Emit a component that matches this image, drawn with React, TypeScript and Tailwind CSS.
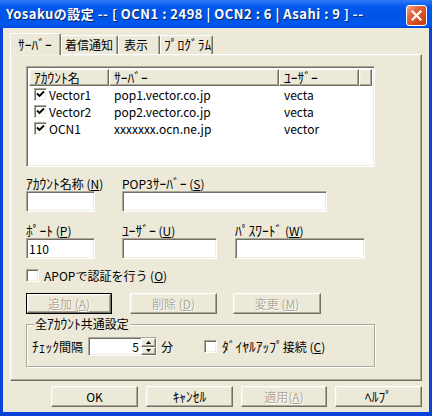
import React from "react";

const sunken =
  "border border-t-[#ACA899] border-l-[#ACA899] border-b-white border-r-white shadow-[inset_1px_1px_0_#716F64,inset_-1px_-1px_0_#F1EFE2] bg-white";
const raised =
  "border border-t-white border-l-white border-b-[#716F64] border-r-[#716F64] shadow-[inset_-1px_-1px_0_#ACA899,inset_1px_1px_0_#F1EFE2] bg-[#ECE9D8]";
const disabledText = "text-[#ACA899] [text-shadow:1px_1px_0_#fff]";

// half-width katakana look tiny in Noto, so bump those runs up a little
const J = ({ t }: { t: string }) => (
  <>
    {t.split(/([\uFF61-\uFF9F]+)/).map((part, i) =>
      /[\uFF61-\uFF9F]/.test(part) ? (
        <span key={i} className="text-[13.5px] leading-none">
          {part}
        </span>
      ) : (
        <React.Fragment key={i}>{part}</React.Fragment>
      )
    )}
  </>
);

const Check = ({ checked }: { checked: boolean }) => (
  <span className={`${sunken} inline-flex w-[13px] h-[13px] shrink-0 items-center justify-center`}>
    {checked && (
      <svg width="9" height="9" viewBox="0 0 9 9">
        <path d="M1 3.5 L3.5 6 L8 1.5" stroke="#000" strokeWidth="1.8" fill="none" />
      </svg>
    )}
  </span>
);

const Mn = ({ k }: { k: string }) => (
  <span>
    (<u>{k}</u>)
  </span>
);

const Button = ({
  children,
  disabled,
  isDefault,
  w,
}: {
  children: React.ReactNode;
  disabled?: boolean;
  isDefault?: boolean;
  w: string;
}) => (
  <div className={`${w} h-[21px] ${isDefault ? "border border-black" : ""} flex`}>
    <div className={`${raised} flex-1 flex items-center justify-center leading-[13px] ${disabled ? disabledText : "text-black"}`}>
      <span className="whitespace-pre">{children}</span>
    </div>
  </div>
);

const Field = ({ w, boxW, label, k, value }: { w: string; boxW: string; label: string; k: string; value?: string }) => (
  <div className={`${w} shrink-0 flex flex-col`}>
    <span className="h-[14px] leading-[14px] whitespace-pre">
      <J t={label + " "} />
      <Mn k={k} />
    </span>
    <div className={`${sunken} ${boxW} h-[21px] pl-[2px] flex items-center leading-[13px]`}>{value}</div>
  </div>
);

const tab = "h-[19px] border-t border-l border-white border-r border-r-[#716F64] rounded-t-[2px] shadow-[inset_-1px_0_0_#ACA899] flex items-center leading-[14px]";

const rows = [
  { name: "Vector1", server: "pop1.vector.co.jp", user: "vecta" },
  { name: "Vector2", server: "pop2.vector.co.jp", user: "vecta" },
  { name: "OCN1", server: "xxxxxxx.ocn.ne.jp", user: "vector" },
];

export default function App() {
  return (
    <div className="w-[432px] h-[416px] flex flex-col bg-[#0842D8] font-['Noto_Sans_CJK_JP','Liberation_Sans',sans-serif] text-[12px] text-black overflow-hidden">
      {/* title bar */}
      <div className="h-[28px] flex items-start justify-between pl-[6px] pr-[5px] bg-[linear-gradient(180deg,#2F7BF5_0%,#1C6CF2_10%,#0058EE_25%,#0054E6_60%,#0058EE_88%,#0047D8_100%)]">
        <span className="mt-[6px] text-white font-bold text-[13px] leading-[16px] tracking-[0.5px] whitespace-pre [text-shadow:1px_1px_0_#0A246A]">
          Yosakuの設定 -- [ OCN1 : 2498 | OCN2 : 6 | Asahi : 9 ] --
        </span>
        <div className="mt-[5px] w-[21px] h-[21px] rounded-[3px] border border-white bg-[linear-gradient(135deg,#F5A98A_0%,#E4643A_35%,#D44A1E_70%,#C0390E_100%)] flex items-center justify-center">
          <svg width="11" height="11" viewBox="0 0 11 11">
            <path d="M1.5 1.5 L9.5 9.5 M9.5 1.5 L1.5 9.5" stroke="#fff" strokeWidth="2.2" strokeLinecap="square" />
          </svg>
        </div>
      </div>

      {/* dialog body */}
      <div className="flex-1 mx-[3px] mb-[4px] bg-[#ECE9D8] px-[7px] flex flex-col">
        {/* tabs */}
        <div className="mt-[5px] h-[21px] flex items-end relative z-10">
          <div className="w-[51px] h-[22px] -mb-[1px] bg-[#ECE9D8] border-t border-l border-white border-r border-r-[#716F64] rounded-t-[2px] shadow-[inset_-1px_0_0_#ACA899] flex items-center pl-[7px] leading-[14px]">
            <J t="ｻｰﾊﾞｰ" />
          </div>
          <div className={`${tab} w-[57px] pl-[3px]`}>着信通知</div>
          <div className={`${tab} w-[42px] pl-[5px]`}>表示</div>
          <div className={`${tab} w-[53px] pl-[3px]`}>
            <J t="ﾌﾟﾛｸﾞﾗﾑ" />
          </div>
        </div>

        {/* tab panel */}
        <div className={`${raised} h-[327px] pl-[15px] flex flex-col`}>
          {/* list view */}
          <div className={`${sunken} mt-[11px] w-[349px] h-[101px] p-[2px] flex flex-col`}>
            <div className="flex h-[17px] leading-[13px]">
              <div className={`${raised} w-[80px] pl-[4px] flex items-center`}>
                <J t="ｱｶｳﾝﾄ名" />
              </div>
              <div className={`${raised} w-[170px] pl-[4px] flex items-center`}>
                <J t="ｻｰﾊﾞｰ" />
              </div>
              <div className={`${raised} w-[80px] pl-[4px] flex items-center`}>
                <J t="ﾕｰｻﾞｰ" />
              </div>
              <div className={`${raised} flex-1`} />
            </div>
            {rows.map((r) => (
              <div key={r.name} className="flex h-[17px] items-center leading-[13px]">
                <div className="w-[80px] pl-[5px] flex items-center gap-[2px]">
                  <Check checked />
                  <span>{r.name}</span>
                </div>
                <div className="w-[170px] pl-[5px]">{r.server}</div>
                <div className="w-[80px] pl-[5px]">{r.user}</div>
              </div>
            ))}
          </div>

          {/* account name / pop3 server */}
          <div className="mt-[10px] flex">
            <Field w="w-[96px]" boxW="w-[69px]" label="ｱｶｳﾝﾄ名称" k="N" />
            <Field w="w-[205px]" boxW="w-[205px]" label="POP3ｻｰﾊﾞｰ" k="S" />
          </div>

          {/* port / user / password */}
          <div className="mt-[12px] flex">
            <Field w="w-[96px]" boxW="w-[69px]" label="ﾎﾟｰﾄ" k="P" value="110" />
            <Field w="w-[113px]" boxW="w-[95px]" label="ﾕｰｻﾞｰ" k="U" />
            <Field w="w-[130px]" boxW="w-[130px]" label="ﾊﾟｽﾜｰﾄﾞ" k="W" />
          </div>

          {/* apop */}
          <div className="mt-[10px] flex items-center gap-[5px] h-[13px] leading-[13px]">
            <Check checked={false} />
            <span className="whitespace-pre">
              APOPで認証を行う <Mn k="O" />
            </span>
          </div>

          {/* add / delete / modify */}
          <div className="mt-[11px] flex">
            <Button w="w-[86px]" disabled isDefault>
              追加 <Mn k="A" />
            </Button>
            <div className="ml-[18px]">
              <Button w="w-[87px]" disabled>
                削除 <Mn k="D" />
              </Button>
            </div>
            <div className="ml-[16px]">
              <Button w="w-[88px]" disabled>
                変更 <Mn k="M" />
              </Button>
            </div>
          </div>

          {/* group box */}
          <div className="relative mt-[10px] w-[349px] h-[43px] border border-[#ACA899] shadow-[inset_1px_1px_0_#fff,1px_1px_0_#fff] flex items-center pl-[5px]">
            <span className="absolute left-[7px] -top-[8px] px-[1px] bg-[#ECE9D8] leading-[14px] whitespace-nowrap">
              <J t="全ｱｶｳﾝﾄ共通設定" />
            </span>
            <span className="w-[56px] shrink-0 mt-[2px] leading-[14px] whitespace-nowrap">
              <J t="ﾁｪｯｸ間隔" />
            </span>
            <div className={`${sunken} mt-[2px] w-[69px] h-[19px] flex items-center`}>
              <span className="flex-1 text-right pr-[2px] leading-[13px]">5</span>
              <div className="w-[15px] h-full flex flex-col">
                <div className={`${raised} flex-1 flex items-center justify-center`}>
                  <svg width="5" height="3" viewBox="0 0 5 3">
                    <path d="M2.5 0 L5 3 L0 3 Z" fill="#000" />
                  </svg>
                </div>
                <div className={`${raised} flex-1 flex items-center justify-center`}>
                  <svg width="5" height="3" viewBox="0 0 5 3">
                    <path d="M0 0 L5 0 L2.5 3 Z" fill="#000" />
                  </svg>
                </div>
              </div>
            </div>
            <span className="ml-[4px] mt-[2px] leading-[14px]">分</span>
            <div className="ml-[31px] mt-[2px] flex items-center gap-[5px] leading-[13px] whitespace-pre">
              <Check checked={false} />
              <span>
                <J t="ﾀﾞｲﾔﾙｱｯﾌﾟ接続 " />
                <Mn k="C" />
              </span>
            </div>
          </div>
        </div>

        {/* bottom buttons */}
        <div className="mt-[5px] flex justify-end gap-[8px]">
          <Button w="w-[87px]">OK</Button>
          <Button w="w-[87px]">
            <J t="ｷｬﾝｾﾙ" />
          </Button>
          <Button w="w-[86px]" disabled>
            適用(<u>A</u>)
          </Button>
          <Button w="w-[87px]">
            <J t="ﾍﾙﾌﾟ" />
          </Button>
        </div>
      </div>
    </div>
  );
}
